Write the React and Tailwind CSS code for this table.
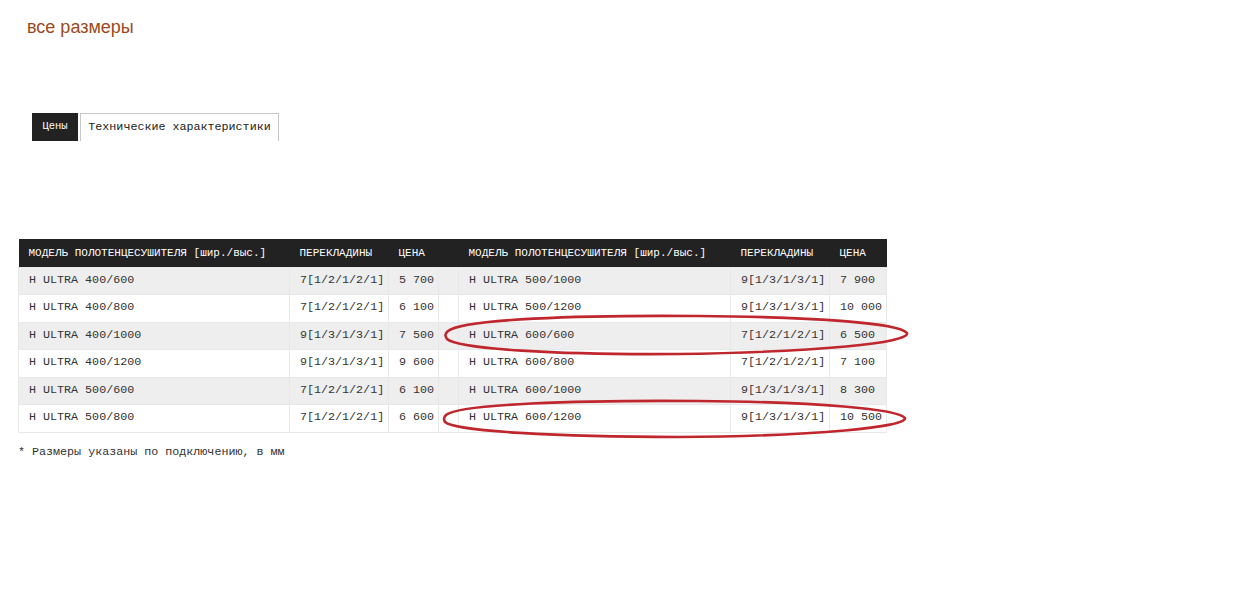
import React from "react";

const left = [
  ["H ULTRA 400/600", "7[1/2/1/2/1]", "5 700"],
  ["H ULTRA 400/800", "7[1/2/1/2/1]", "6 100"],
  ["H ULTRA 400/1000", "9[1/3/1/3/1]", "7 500"],
  ["H ULTRA 400/1200", "9[1/3/1/3/1]", "9 600"],
  ["H ULTRA 500/600", "7[1/2/1/2/1]", "6 100"],
  ["H ULTRA 500/800", "7[1/2/1/2/1]", "6 600"],
];

const right = [
  ["H ULTRA 500/1000", "9[1/3/1/3/1]", "7 900"],
  ["H ULTRA 500/1200", "9[1/3/1/3/1]", "10 000"],
  ["H ULTRA 600/600", "7[1/2/1/2/1]", "6 500"],
  ["H ULTRA 600/800", "7[1/2/1/2/1]", "7 100"],
  ["H ULTRA 600/1000", "9[1/3/1/3/1]", "8 300"],
  ["H ULTRA 600/1200", "9[1/3/1/3/1]", "10 500"],
];

const mono = "font-[family-name:Liberation_Mono,Courier_New,monospace]";

export default function App() {
  return (
    <div className={`min-h-[598px] w-[1260px] bg-white ${mono} text-[11.7px] text-[#333]`}>
      {/* Title */}
      <div className="pl-[27px] pt-[15px]">
        <h1 className="font-[family-name:Liberation_Sans,Arial,sans-serif] text-[18px] leading-[24px] text-[#9a4a1c]">
          все размеры
        </h1>
      </div>

      {/* Tabs */}
      <div className="mt-[74px] flex items-end pl-[32px]">
        <div className="flex h-[28px] w-[46px] items-center justify-center bg-[#222] text-[10.5px] text-white">
          Цены
        </div>
        <div className="ml-[2px] flex h-[28px] w-[199px] items-center justify-center border border-b-0 border-[#c8c8c8] bg-white text-[#222]">
          Технические характеристики
        </div>
      </div>

      {/* Price table */}
      <div className="relative ml-[18px] mt-[98px] w-[868px]">
        <table className="w-[868px] table-fixed border-collapse">
          <colgroup>
            <col className="w-[271px]" />
            <col className="w-[99px]" />
            <col className="w-[50px]" />
            <col className="w-[20px]" />
            <col className="w-[272px]" />
            <col className="w-[99px]" />
            <col className="w-[57px]" />
          </colgroup>
          <thead>
            <tr className="h-[28px] bg-[#222] text-left text-[11px] text-white">
              <th className="px-[10px] font-normal whitespace-nowrap">МОДЕЛЬ ПОЛОТЕНЦЕСУШИТЕЛЯ [шир./выс.]</th>
              <th className="px-[10px] font-normal">ПЕРЕКЛАДИНЫ</th>
              <th className="px-[10px] font-normal">ЦЕНА</th>
              <th></th>
              <th className="px-[10px] font-normal whitespace-nowrap">МОДЕЛЬ ПОЛОТЕНЦЕСУШИТЕЛЯ [шир./выс.]</th>
              <th className="px-[10px] font-normal">ПЕРЕКЛАДИНЫ</th>
              <th className="px-[10px] font-normal">ЦЕНА</th>
            </tr>
          </thead>
          <tbody>
            {left.map((row, i) => (
              <tr
                key={i}
                className={`h-[27.5px] ${i % 2 === 0 ? "bg-[#eeeeee]" : "bg-white"}`}
              >
                <td className="border border-[#e8e8e8] px-[10px] whitespace-nowrap">{row[0]}</td>
                <td className="border border-[#e8e8e8] px-[10px] whitespace-nowrap">{row[1]}</td>
                <td className="border border-[#e8e8e8] px-[10px] whitespace-nowrap">{row[2]}</td>
                <td className="border border-[#e8e8e8]"></td>
                <td className="border border-[#e8e8e8] px-[10px] whitespace-nowrap">{right[i][0]}</td>
                <td className="border border-[#e8e8e8] px-[10px] whitespace-nowrap">{right[i][1]}</td>
                <td className="border border-[#e8e8e8] px-[10px] pr-0 whitespace-nowrap">{right[i][2]}</td>
              </tr>
            ))}
          </tbody>
        </table>

        {/* hand-drawn highlight marks */}
        <svg
          className="pointer-events-none absolute left-0 top-0 overflow-visible"
          width="868"
          height="200"
        >
          <path
            d="M430 92 C 445 80, 560 76, 680 77 C 800 78, 880 84, 889 94 C 892 104, 800 113, 660 115 C 540 116, 440 110, 429 100 C 426 96, 428 94, 430 92 Z"
            fill="none"
            stroke="#c0262d"
            strokeWidth="2.6"
          />
          <path
            d="M428 176 C 440 165, 560 161, 680 162 C 800 163, 880 170, 887 179 C 889 188, 800 197, 660 198 C 540 198, 436 192, 427 183 C 425 180, 426 178, 428 176 Z"
            fill="none"
            stroke="#c0262d"
            strokeWidth="2.6"
          />
        </svg>

        <p className="mt-[12px] leading-[14px]">* Размеры указаны по подключению, в мм</p>
      </div>
    </div>
  );
}
